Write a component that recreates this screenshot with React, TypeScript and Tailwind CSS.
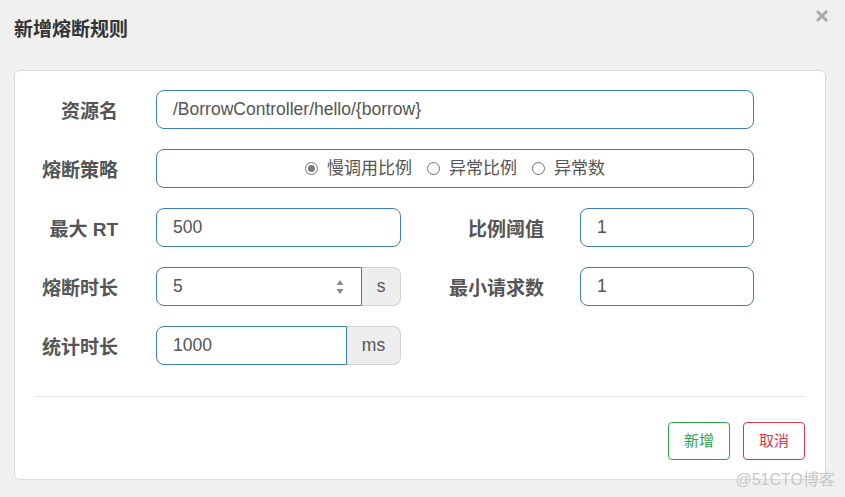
import React from "react";

const font = { fontFamily: '"Liberation Sans", "Noto Sans CJK SC", sans-serif' };

function Label({ text, width }: { text: string; width: string }) {
  return (
    <div className={`${width} shrink-0 pt-[4px] text-right text-[19px] font-bold text-[#555] leading-none`}>
      {text}
    </div>
  );
}

function TextBox({ value, width }: { value: string; width: string }) {
  return (
    <div
      className={`${width} h-[39px] shrink-0 flex items-center px-4 rounded-[8px] border border-[#3c7fbf] bg-white text-[17.5px] text-[#555]`}
    >
      {value}
    </div>
  );
}

function AddonBox({
  value,
  unit,
  inputWidth,
  addonWidth,
  spinner,
}: {
  value: string;
  unit: string;
  inputWidth: string;
  addonWidth: string;
  spinner?: boolean;
}) {
  return (
    <div className="flex h-[39px] shrink-0">
      <div
        className={`${inputWidth} flex items-center justify-between pl-4 pr-[17px] rounded-l-[8px] border border-[#3c7fbf] bg-white text-[17.5px] text-[#555]`}
      >
        <span>{value}</span>
        {spinner && (
          <svg width="8" height="18" viewBox="0 0 8 18">
            <path d="M4 2 L7.5 7 L0.5 7 Z" fill="#8a8a8a" />
            <path d="M4 16 L7.5 11 L0.5 11 Z" fill="#8a8a8a" />
          </svg>
        )}
      </div>
      <div
        className={`${addonWidth} flex items-center justify-center rounded-r-[8px] border border-l-0 border-[#cfcfcf] bg-[#eeeeee] text-[17.5px] text-[#555]`}
      >
        {unit}
      </div>
    </div>
  );
}

function Radio({ label, checked }: { label: string; checked?: boolean }) {
  return (
    <div className="flex items-center">
      <span className="w-[13px] h-[13px] rounded-full border border-[#6f6f6f] bg-white flex items-center justify-center">
        {checked && <span className="w-[7px] h-[7px] rounded-full bg-[#7a7a7a]" />}
      </span>
      <span className="ml-[9px] text-[17px] text-[#555]">{label}</span>
    </div>
  );
}

export default function App() {
  return (
    <div className="relative w-[845px] h-[497px] bg-[#f0f0f0] overflow-hidden" style={font}>
      {/* Header */}
      <div className="flex items-start justify-between h-[70px] pl-[14px] pr-[16px]">
        <h1 className="mt-[20px] text-[19px] font-bold text-[#333] leading-[20px]">新增熔断规则</h1>
        <button className="mt-[9px]" aria-label="close">
          <svg width="14" height="14" viewBox="0 0 14 14">
            <path d="M2 2 L12 12 M12 2 L2 12" stroke="#aaaaaa" strokeWidth="3" strokeLinecap="butt" />
          </svg>
        </button>
      </div>

      {/* Card */}
      <div className="mx-[14px] w-[812px] h-[410px] bg-white border border-[#dcdcdc] rounded-[6px] pt-[19px]">
        <div className="flex flex-col gap-[20px]">
          <div className="flex items-center">
            <Label text="资源名" width="w-[103px]" />
            <div className="ml-[38px]">
              <TextBox value="/BorrowController/hello/{borrow}" width="w-[598px]" />
            </div>
          </div>

          <div className="flex items-center">
            <Label text="熔断策略" width="w-[103px]" />
            <div className="ml-[38px] w-[598px] h-[39px] flex items-center justify-center gap-[15px] rounded-[8px] border border-[#3c7fbf] bg-white">
              <Radio label="慢调用比例" checked />
              <Radio label="异常比例" />
              <Radio label="异常数" />
            </div>
          </div>

          <div className="flex items-center">
            <Label text="最大 RT" width="w-[103px]" />
            <div className="ml-[38px]">
              <TextBox value="500" width="w-[245px]" />
            </div>
            <Label text="比例阈值" width="w-[143px]" />
            <div className="ml-[36px]">
              <TextBox value="1" width="w-[174px]" />
            </div>
          </div>

          <div className="flex items-center">
            <Label text="熔断时长" width="w-[103px]" />
            <div className="ml-[38px]">
              <AddonBox value="5" unit="s" inputWidth="w-[206px]" addonWidth="w-[39px]" spinner />
            </div>
            <Label text="最小请求数" width="w-[143px]" />
            <div className="ml-[36px]">
              <TextBox value="1" width="w-[174px]" />
            </div>
          </div>

          <div className="flex items-center">
            <Label text="统计时长" width="w-[103px]" />
            <div className="ml-[38px]">
              <AddonBox value="1000" unit="ms" inputWidth="w-[191px]" addonWidth="w-[54px]" />
            </div>
          </div>
        </div>

        <div className="mx-[20px] mt-[31px] border-t border-[#e5e5e5]" />

        <div className="flex justify-end gap-[13px] mt-[25px] pr-[20px]">
          <button className="w-[62px] h-[38px] rounded-[4px] border border-[#28a745] bg-white text-[15px] text-[#28a745]">
            新增
          </button>
          <button className="w-[62px] h-[38px] rounded-[4px] border border-[#dc3545] bg-white text-[15px] text-[#dc3545]">
            取消
          </button>
        </div>
      </div>

      {/* Watermark */}
      <div className="absolute right-[10px] bottom-[9px] text-[16px] text-[#c8c8c8] leading-none">
        @51CTO博客
      </div>
    </div>
  );
}
